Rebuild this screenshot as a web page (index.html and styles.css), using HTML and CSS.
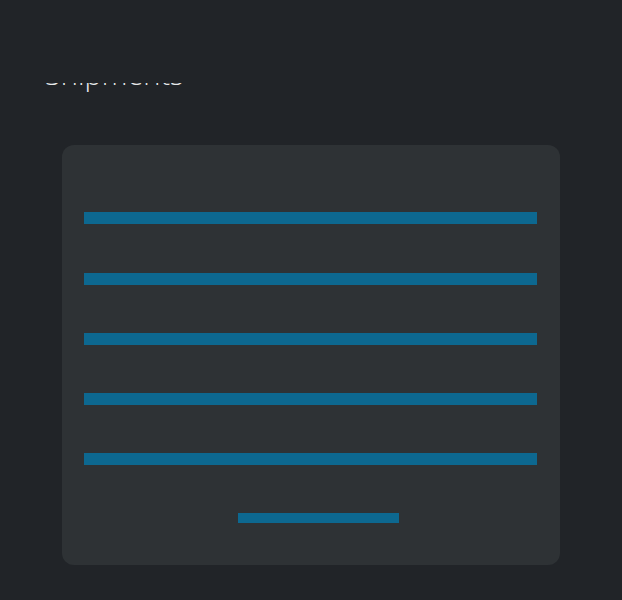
FILE: index.html
```html
<!DOCTYPE html>
<html>
<head>
<meta charset="utf-8">
<title>Shipments</title>
<link rel="stylesheet" href="styles.css">
</head>
<body>
<div class="topbar"></div>
<main class="page">
  <h1 class="title">Shipments</h1>
  <section class="card">
    <div class="bar"></div>
    <div class="bar"></div>
    <div class="bar"></div>
    <div class="bar"></div>
    <div class="bar"></div>
    <div class="bar bar-short"></div>
  </section>
</main>
</body>
</html>
```

FILE: styles.css
```css
html, body {
  margin: 0;
  padding: 0;
  background: #212428;
  font-family: "Open Sans", "Liberation Sans", sans-serif;
}
.topbar {
  position: fixed;
  top: 0;
  left: 0;
  right: 0;
  height: 83px;
  background: #212428;
  z-index: 2;
}
.page {
  padding: 0 62px 0 62px;
  display: flex;
  flex-direction: column;
}
.title {
  margin: 0;
  margin-left: -17px;
  padding-top: 56px;
  font-size: 29px;
  line-height: 36px;
  font-weight: 300;
  color: #e8eaec;
}
.card {
  margin-top: 53px;
  width: 498px;
  height: 420px;
  box-sizing: border-box;
  background: #2e3235;
  border-radius: 12px;
  padding: 67px 23px 0 22px;
  display: flex;
  flex-direction: column;
  gap: 48px;
}
.bar {
  height: 12px;
  background: #0d6890;
}
.bar:first-child {
  margin-bottom: 1px;
}
.bar-short {
  height: 10px;
  width: 161px;
  margin-left: 154px;
}
```
